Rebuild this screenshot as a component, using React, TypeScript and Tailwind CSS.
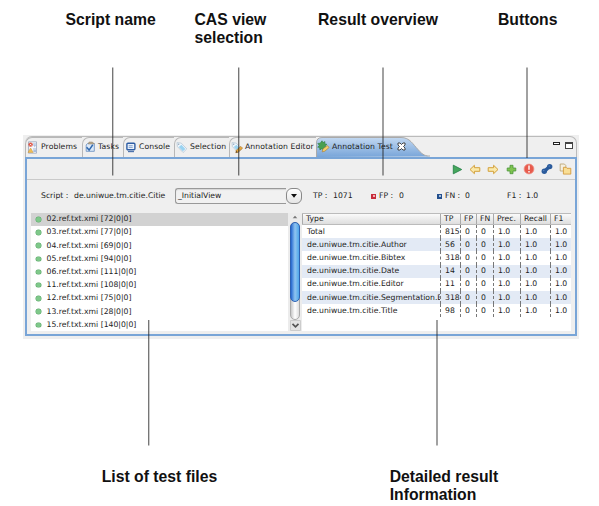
import type { ReactNode } from 'react';

function ProblemsIcon() {
  return (
    <svg width="12" height="13" viewBox="0 0 12 13" className="block shrink-0">
      <path d="M1.5 .8h8v11.4h-8z" fill="#f4f6fa" stroke="#9aa6bb" strokeWidth=".8" />
      <path d="M6 2h3v3H6zM6 7h3v4H6z" fill="#c9d6ea" />
      <circle cx="3.6" cy="3.6" r="2.2" fill="#dd5545" />
      <path d="M2.8 2.8l1.6 1.6M4.4 2.8L2.8 4.4" stroke="#fff" strokeWidth=".7" />
      <path d="M3.6 7l2.6 4.4H1z" fill="#f0c056" stroke="#c9913a" strokeWidth=".5" />
      <path d="M7.2 3.2l1.6 1.6-1.6 1.6M6.6 11c0-3 3-3 3 0z" fill="#a9bddd" />
    </svg>
  );
}

function TasksIcon() {
  return (
    <svg width="11" height="12" viewBox="0 0 11 12" className="block shrink-0">
      <path d="M2.5 2.5h6.8v7.8H1.2V4z" fill="#dce9f8" stroke="#6f94c4" strokeWidth=".9" />
      <path d="M4 1h3.5l1.8 2H3.2z" fill="#b9a98b" stroke="#8c8371" strokeWidth=".5" />
      <path d="M1.6 6.2l2.5 2.9L7.8 3.8" fill="none" stroke="#2e68ae" strokeWidth="1.5" />
    </svg>
  );
}

function ConsoleIcon() {
  return (
    <svg width="10" height="11" viewBox="0 0 10 11" className="block shrink-0">
      <rect x=".9" y="1.2" width="8" height="6.6" rx="1" fill="#e9f1fb" stroke="#2d5da4" strokeWidth="1.4" />
      <path d="M2.7 3.7h4M2.7 5.4h4" stroke="#6c8fc2" strokeWidth=".8" />
      <path d="M2 9.6h6" stroke="#4d73ad" strokeWidth="1.2" />
    </svg>
  );
}

function TagIcon({ pencil = false }: { pencil?: boolean }) {
  return (
    <svg width="12" height="13" viewBox="0 0 12 13" className="block shrink-0">
      <path d="M1 1.6l4.2.5 5.6 5.8-3.7 3.6L1.4 5.6z" fill="#eef5fb" stroke="#b6c6d5" strokeWidth=".8" />
      <path d="M5.4 3.7l4 4.2-2.6 2.4-4-4.4z" fill="#9ad3f1" />
      <circle cx="2.7" cy="3.2" r=".7" fill="#8da3b7" />
      {pencil && (
        <g>
          <path d="M4.8 11.8l.5-2.6 4.5-3.8 1.8 1.8-4.4 4z" fill="#e9aa3d" stroke="#a46d27" strokeWidth=".6" />
          <path d="M4.8 11.8l.5-2 1.4 1.4z" fill="#594630" />
        </g>
      )}
    </svg>
  );
}

function TestIcon() {
  return (
    <svg width="13" height="13" viewBox="0 0 13 13" className="block shrink-0">
      <path d="M5 .8l1 1.8 2-1-.3 2.2 2.2.5-1.7 1.6 1 2-2.3-.1-.3 2.4-1.9-1.5-1.8 1.2-.2-2.2-2-.6 1.7-1.5L.8 3.4l2.4-.2z" fill="#4aa04f" stroke="#2d8041" strokeWidth=".6" />
      <path d="M5.2 11.9l.7-2.9 4.4-3.5 1.8 2-4.3 3.7z" fill="#f4cf68" stroke="#a57a35" strokeWidth=".6" />
    </svg>
  );
}

function Tab({ icon, label, className }: { icon: ReactNode; label: string; className: string }) {
  return (
    <div className={`flex h-full items-center rounded-tl-[7px] border-l border-t border-[#b8b8b8] pb-px ${className}`}>
      {icon}
      <span className="whitespace-pre">{label}</span>
    </div>
  );
}

function Arrow({ left = false }: { left?: boolean }) {
  return (
    <svg width="12" height="11" viewBox="0 0 12 11" className={left ? 'block' : 'block -scale-x-100'}>
      <path d="M1 5.5L5.4 1.3v2.4h5.4v3.6H5.4v2.4z" fill="#fbe9a9" stroke="#d3a03b" strokeWidth="1" strokeLinejoin="round" />
    </svg>
  );
}

function Toolbar() {
  return (
    <div className="flex h-[21px] items-center justify-end border-b border-[#cacaca]">
      <div className="flex w-[18px] justify-center">
        <svg width="11" height="11" viewBox="0 0 11 11"><path d="M1.3 1.2L9.7 5.5 1.3 9.8z" fill="#45a65c" stroke="#27834a" strokeWidth=".9" /></svg>
      </div>
      <div className="flex w-[18px] justify-center"><Arrow left /></div>
      <div className="flex w-[18px] justify-center"><Arrow /></div>
      <div className="flex w-[18px] justify-center">
        <svg width="11" height="11" viewBox="0 0 11 11"><path d="M4 1.3h3V4h2.8v3H7v2.7H4V7H1.2V4H4z" fill="#7fc350" stroke="#4b963b" strokeWidth=".8" /></svg>
      </div>
      <div className="flex w-[18px] justify-center">
        <svg width="12" height="12" viewBox="0 0 12 12">
          <circle cx="6" cy="6" r="4.9" fill="#e75b4d" stroke="#ef9287" strokeWidth=".8" />
          <path d="M6 2.5v4.3M6 7.9v1.5" stroke="#fff" strokeWidth="1.4" />
        </svg>
      </div>
      <div className="flex w-[18px] justify-center">
        <svg width="12" height="12" viewBox="0 0 12 12">
          <path d="M3.3 8.5l5.2-5" stroke="#2b5b9c" strokeWidth="3.4" />
          <circle cx="3.3" cy="8.3" r="2.7" fill="#2b5b9c" />
          <circle cx="8.7" cy="3.6" r="2.7" fill="#2b5b9c" />
          <circle cx="2.8" cy="7.6" r=".6" fill="#6f99d0" />
          <circle cx="8.2" cy="3" r=".6" fill="#6f99d0" />
        </svg>
      </div>
      <div className="flex w-[19px] justify-center">
        <svg width="13" height="12" viewBox="0 0 13 12">
          <path d="M1.2 1h4.2l1.4 1.5V8H1.2z" fill="#f5f0e1" stroke="#b99f69" strokeWidth=".8" />
          <path d="M4.4 4.3h2.8l.8 1h3.8v5.8H4.4z" fill="#f9de94" stroke="#d49b3d" strokeWidth=".9" />
        </svg>
      </div>
    </div>
  );
}

const files = [
  '02.ref.txt.xmi [72|0|0]',
  '03.ref.txt.xmi [77|0|0]',
  '04.ref.txt.xmi [69|0|0]',
  '05.ref.txt.xmi [94|0|0]',
  '06.ref.txt.xmi [111|0|0]',
  '11.ref.txt.xmi [108|0|0]',
  '12.ref.txt.xmi [75|0|0]',
  '13.ref.txt.xmi [28|0|0]',
  '15.ref.txt.xmi [140|0|0]',
];

const results = [
  ['Total', '815'],
  ['de.uniwue.tm.citie.Author', '56'],
  ['de.uniwue.tm.citie.Bibtex', '318'],
  ['de.uniwue.tm.citie.Date', '14'],
  ['de.uniwue.tm.citie.Editor', '11'],
  ['de.uniwue.tm.citie.Segmentation.E', '318'],
  ['de.uniwue.tm.citie.Title', '98'],
];

const columns = 'grid grid-cols-[138px_20px_16px_17px_27px_30px_21px]';
const headers = ['Type', 'TP', 'FP', 'FN', 'Prec.', 'Recall', 'F1'];

function FileList() {
  return (
    <div className="h-[118px] w-[257px] overflow-hidden bg-white">
      {files.map((file, i) => (
        <div key={file} className={`flex h-[13.2px] items-center pb-[0.6px] pl-[5px] ${i === 0 ? 'bg-[#d2d2d2]' : ''}`}>
          <span className="mr-[6px] size-[4.5px] rounded-full bg-[#7fc88a] ring-[0.5px] ring-[#5da96c]" />
          <span className="whitespace-pre">{file}</span>
        </div>
      ))}
    </div>
  );
}

function ScrollBar() {
  return (
    <div className="flex h-[118px] w-[14px] flex-col items-center bg-[#ececec]">
      <svg width="10" height="9" viewBox="0 0 10 9" className="shrink-0"><path d="M2.7 5.3L5 2.8l2.3 2.5z" fill="#777" /></svg>
      <div className="flex w-[10px] flex-1 flex-col rounded-full border border-[#aaa] bg-gradient-to-r from-[#c8c8c8] via-white to-[#ddd]">
        <div className="-mx-px -mt-px h-[80px] rounded-full border border-[#2d62b4] bg-gradient-to-r from-[#2466ce] via-[#8fc4f0] to-[#4ca6ea]" />
      </div>
      <svg width="11" height="11" viewBox="0 0 11 11" className="shrink-0">
        <path d="M.5.5h10v10H.5z" fill="#e4e4e4" stroke="#ccc" />
        <path d="M2.5 3.8l3 3 3-3" stroke="#555" strokeWidth="1.7" fill="none" />
      </svg>
    </div>
  );
}

function ResultTable() {
  return (
    <div className="h-[118px] w-[269px] overflow-hidden bg-white">
      <div className={`${columns} h-[12px] border-y border-[#bbb] bg-gradient-to-b from-[#fafafa] to-[#dedede]`}>
        {headers.map((name) => (
          <div key={name} className="flex items-center overflow-hidden whitespace-pre border-l border-[#aaa] pl-[3px]">{name}</div>
        ))}
      </div>
      {results.map(([type, tp], row) => (
        <div key={type} className={`${columns} h-[13.2px] ${row % 2 ? 'bg-[#e3eaf5]' : 'bg-white'}`}>
          {[type, tp, '0', '0', '1.0', '1.0', '1.0'].map((value, i) => (
            <div key={i} className={`flex items-center overflow-hidden whitespace-pre ${i ? 'border-l border-dashed border-[#777] pl-[4px]' : 'pl-[5px]'}`}>{value}</div>
          ))}
        </div>
      ))}
    </div>
  );
}

function SummaryRow() {
  return (
    <div className="flex h-[33px] items-center pb-px pl-[14px]">
      <span className="w-[33px] whitespace-pre">Script :</span>
      <span className="w-[101px] whitespace-pre">de.uniwue.tm.citie.Citie</span>
      <div className="flex h-[16px] w-[111px] items-center rounded-l-[3px] border border-r-0 border-[#999] bg-[#f1f1f1] pl-[2px] shadow-[inset_0_1px_1px_#d5d5d5]">_InitialView</div>
      <div className="flex size-[16px] items-center justify-center rounded-[6px] border border-[#888] bg-gradient-to-b from-white to-[#e5e5e5]">
        <svg width="8" height="6" viewBox="0 0 8 6"><path d="M1 1h6L4 4.8z" fill="#111" /></svg>
      </div>
      <span className="ml-[11px] w-[20px] whitespace-pre">TP :</span>
      <span className="w-[38px]">1071</span>
      <i className="mr-[3px] flex size-[5px] items-center justify-center bg-[#c72b3b]"><b className="size-[2px] bg-[#efb3b7]" /></i>
      <span className="w-[20px] whitespace-pre">FP :</span>
      <span className="w-[38px]">0</span>
      <i className="mr-[3px] flex size-[5px] items-center justify-center bg-[#234f8e]"><b className="size-[2px] bg-[#a7bfdd]" /></i>
      <span className="w-[20px] whitespace-pre">FN :</span>
      <span className="w-[42px]">0</span>
      <span className="w-[19px] whitespace-pre">F1 :</span>
      <span>1.0</span>
    </div>
  );
}

function AnnotationWindow() {
  return (
    <section className="ml-[23px] h-[204px] w-[556px] bg-[#efefef] px-[2px] pt-px text-[7.7px] leading-[10px] text-[#222] [font-family:'DejaVu_Sans',sans-serif]">
      <div className="flex h-[21px] rounded-t-[7px] border-r border-t border-[#bbb] tracking-[0.08px]">
        <Tab icon={<ProblemsIcon />} label="Problems" className="w-[57px] gap-[2px] pl-px" />
        <Tab icon={<TasksIcon />} label="Tasks" className="w-[41px] gap-[2px] pl-[2px]" />
        <Tab icon={<ConsoleIcon />} label="Console" className="w-[51px] gap-[3px] pl-[2px]" />
        <Tab icon={<TagIcon />} label="Selection" className="w-[55px] gap-[2px] pl-[1px]" />
        <Tab icon={<TagIcon pencil />} label="Annotation Editor" className="w-[87px] gap-[2px] pl-[1px]" />
        <div className="relative flex h-full w-[114px] items-center pb-px pl-px">
          <svg className="absolute inset-0" width="114" height="20" viewBox="0 0 114 20">
            <defs><linearGradient id="activeTab" x2="0" y2="1"><stop stopColor="#c2d8f1" /><stop offset="1" stopColor="#78a5d9" /></linearGradient></defs>
            <path d="M.5 20V6Q.5.5 6 .5h79c9 0 12 7 17 12 5 6 8 6.5 12 7z" fill="url(#activeTab)" />
            <path d="M.5 20V6Q.5.5 6 .5h79c9 0 12 7 17 12 5 6 8 6.5 12 6.5" fill="none" stroke="#aaa" />
          </svg>
          <div className="relative flex items-center gap-[2px]">
            <TestIcon />
            <span className="whitespace-pre">Annotation Test</span>
            <svg width="9" height="9" viewBox="0 0 9 9" className="ml-[2px]">
              <path d="M1 1h2l1.5 1.5L6 1h2v2L6.5 4.5 8 6v2H6L4.5 6.5 3 8H1V6l1.5-1.5L1 3z" fill="#fff" stroke="#333" strokeWidth=".9" />
            </svg>
          </div>
        </div>
        <div className="ml-auto flex gap-[5px] pr-[3px] pt-[5px]">
          <div className="h-[3px] w-[7px] border border-[#222] bg-white" />
          <div className="h-[7px] w-[8px] border border-t-2 border-[#444] bg-white" />
        </div>
      </div>
      <div className="h-[179px] border-2 border-[#79a5d7]">
        <Toolbar />
        <SummaryRow />
        <div className="flex pl-[4px]">
          <FileList />
          <ScrollBar />
          <ResultTable />
        </div>
      </div>
    </section>
  );
}

function Callouts() {
  return (
    <svg className="pointer-events-none absolute inset-0" width="599" height="506" viewBox="0 0 599 506">
      <g stroke="#222" strokeOpacity=".65" strokeWidth="1.3">
        <path d="M112.7 67.5V175.5M238.7 67.5V175.5M383 67.5V175.5M527 67.5V158M148.7 320V445.5M437 320V445.5" />
      </g>
    </svg>
  );
}

export default function App() {
  return (
    <main className="relative h-[506px] w-[599px] overflow-hidden bg-white text-[15.75px] font-bold leading-[18px] text-[#111] [font-family:'Liberation_Sans',Arial,sans-serif]">
      <header className="flex h-[135px] whitespace-nowrap pl-[65.5px] pt-[11px]">
        <div className="w-[129px]">Script name</div>
        <div className="w-[123.5px]">CAS view<br />selection</div>
        <div className="w-[180px]">Result overview</div>
        <div>Buttons</div>
      </header>
      <div className="font-normal"><AnnotationWindow /></div>
      <footer className="flex whitespace-nowrap pl-[101.7px] pt-[129px] leading-[17.5px]">
        <div className="w-[288px]">List of test files</div>
        <div>Detailed result<br />Information</div>
      </footer>
      <Callouts />
    </main>
  );
}
